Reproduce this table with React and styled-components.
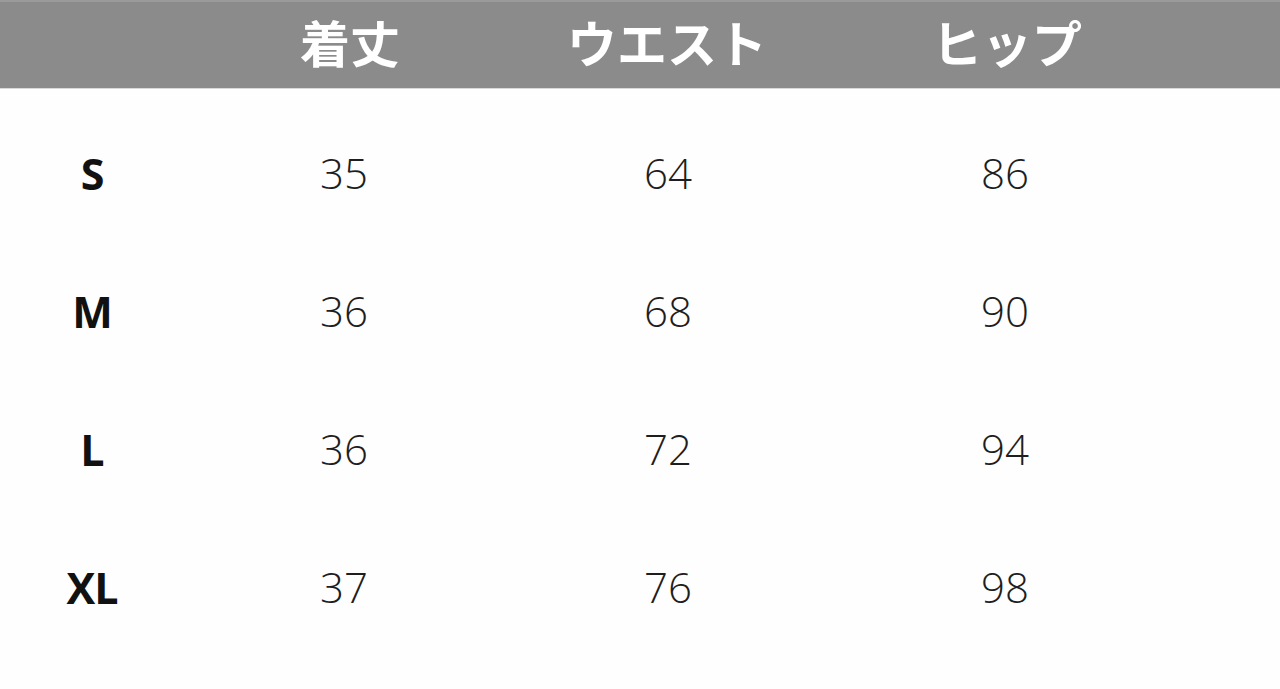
import React from "react";
import styled, { createGlobalStyle } from "styled-components";

const Global = createGlobalStyle`
  html, body {
    margin: 0;
    padding: 0;
    background: #ffffff;
  }
  body {
    font-family: "Open Sans", "Noto Sans CJK JP", sans-serif;
  }
`;

const Page = styled.div`
  width: 1280px;
  height: 689px;
  overflow: hidden;
  background: #fefefe;
`;

const cols = "184px 326px 316px 360px 1fr";

const HeaderBar = styled.div`
  display: grid;
  grid-template-columns: ${cols};
  align-items: center;
  height: 89px;
  box-sizing: border-box;
  padding-bottom: 8px;
  background: #8b8b8b;
  border-top: 2px solid #9a9a9a;
  border-bottom: 1px solid #d9d9d9;
`;

const HeadCell = styled.div`
  text-align: center;
  color: #ffffff;
  font-family: "Noto Sans CJK JP", sans-serif;
  font-weight: 700;
  font-size: 50px;
  line-height: 1;
  margin-left: ${(p) => p.$shift || 0}px;
`;

const Body = styled.div`
  padding-top: 15px;
`;

const Row = styled.div`
  display: grid;
  grid-template-columns: ${cols};
  align-items: center;
  height: 138px;
`;

const SizeCell = styled.div`
  text-align: center;
  font-family: "Open Sans", sans-serif;
  font-weight: 700;
  font-size: 43px;
  line-height: 1;
  color: #111111;
  letter-spacing: -1px;
`;

const ValueCell = styled.div`
  text-align: center;
  font-family: "Open Sans", sans-serif;
  font-weight: 350;
  font-size: 42px;
  line-height: 1;
  color: #1e1e1e;
  margin-left: ${(p) => p.$shift || 0}px;
`;

const headers = [
  { label: "着丈", shift: 6 },
  { label: "ウエスト", shift: -2 },
  { label: "ヒップ", shift: 2 },
];

const rows = [
  ["S", "35", "64", "86"],
  ["M", "36", "68", "90"],
  ["L", "36", "72", "94"],
  ["XL", "37", "76", "98"],
];

export default function App() {
  return (
    <>
      <Global />
      <Page>
        <HeaderBar>
          <div />
          {headers.map((h) => (
            <HeadCell key={h.label} $shift={h.shift}>
              {h.label}
            </HeadCell>
          ))}
        </HeaderBar>
        <Body>
          {rows.map(([size, a, b, c]) => (
            <Row key={size}>
              <SizeCell>{size}</SizeCell>
              <ValueCell $shift={-6}>{a}</ValueCell>
              <ValueCell>{b}</ValueCell>
              <ValueCell $shift={-2}>{c}</ValueCell>
            </Row>
          ))}
        </Body>
      </Page>
    </>
  );
}
